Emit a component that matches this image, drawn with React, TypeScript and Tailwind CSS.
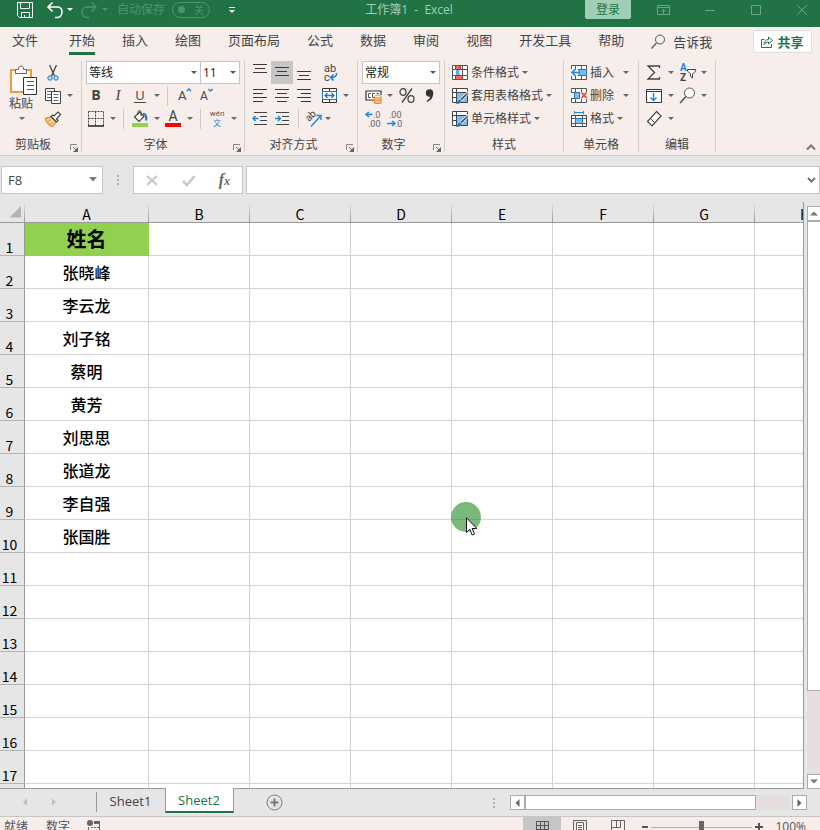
import React, { useState } from "react";

const columns = ["A", "B", "C", "D", "E", "F", "G", "H"];
const names = ["姓名", "张晓峰", "李云龙", "刘子铭", "蔡明", "黄芳", "刘思思", "张道龙", "李自强", "张国胜"];
const rowCount = 18;

const ribbonTabs = ["文件", "开始", "插入", "绘图", "页面布局", "公式", "数据", "审阅", "视图", "开发工具", "帮助"];

type SvgProps = { w?: number; h?: number; className?: string; children: React.ReactNode };

const Svg = ({ w = 16, h = 16, className = "", children }: SvgProps) => (
  <svg
    width={w}
    height={h}
    viewBox={`0 0 ${w} ${h}`}
    fill="none"
    className={`shrink-0 overflow-visible font-[Roboto,sans-serif] ${className}`}
    aria-hidden="true"
  >
    {children}
  </svg>
);

const Caret = ({ className = "text-[#666]" }: { className?: string }) => (
  <Svg w={11} h={11} className={className}>
    <path d="M3 4h6L6 7z" fill="currentColor" />
  </Svg>
);

const Divider = () => (
  <span className="flex h-5 w-[11px] shrink-0 justify-center">
    <span className="h-full w-px bg-[#d0cbc9]" />
  </span>
);

type ToolProps = { label: string; active?: boolean; className?: string; children: React.ReactNode };

const Tool = ({ label, active, className = "w-[22px]", children }: ToolProps) => (
  <button
    aria-label={label}
    className={`flex h-[23px] shrink-0 items-center justify-center ${className} ${active ? "bg-[#c8c6c4]" : ""}`}
  >
    {children}
  </button>
);

const Row = ({ className = "pl-1", children }: { className?: string; children: React.ReactNode }) => (
  <div className={`flex h-[23px] items-center ${className}`}>{children}</div>
);

const Launcher = () => (
  <button aria-label="对话框启动器" className="mr-[3px] ml-1 self-end">
    <Svg w={8} h={8}>
      <path d="M.5 6V.5H7" stroke="#8a8886" />
      <path d="M3 3l3.5 3.5" stroke="#666" />
      <path d="M8 3v5H3z" fill="#666" />
    </Svg>
  </button>
);

type GroupProps = { title: string; width: string; launcher?: boolean; children: React.ReactNode };

const Group = ({ title, width, launcher, children }: GroupProps) => (
  <section aria-label={title} className={`flex shrink-0 flex-col border-r border-[#d2cecb] ${width}`}>
    {children}
    <div className="mt-auto flex h-[15px] items-center">
      <span className="flex-1 text-center leading-[15px]">{title}</span>
      {launcher && <Launcher />}
    </div>
  </section>
);

type PickerProps = { label: string; width: string; options: string[] };

const Picker = ({ label, width, options }: PickerProps) => (
  <div className={`relative h-[23px] shrink-0 ${width}`}>
    <select
      aria-label={label}
      className="h-full w-full appearance-none border border-[#c6c6c6] bg-white pl-[2px] text-xs text-[#222]"
    >
      {options.map((option) => (
        <option key={option}>{option}</option>
      ))}
    </select>
    <Caret className="pointer-events-none absolute top-[6px] right-[2px] text-[#555]" />
  </div>
);

/* horizontal strokes used by the alignment buttons */
const Lines = ({ rows }: { rows: number[][] }) => (
  <Svg w={16} h={23}>
    {rows.map(([x1, x2, y]) => (
      <path key={y} d={`M${x1} ${y}.5H${x2}`} stroke="#3b3a39" />
    ))}
  </Svg>
);

const TableGrid = () => (
  <>
    <path d="M.5.5h15v14H.5z" fill="#fff" />
    <path d="M.5.5h15v14H.5zM.5 4.5h15M.5 10.5h15M4.5.5v14M10.5.5v14" stroke="#555" />
  </>
);

const TableBrush = () => (
  <Svg>
    <path d="M.5.5h15v14H.5z" fill="#fff" />
    <path d="M5 5h10v9H5z" fill="#7fbaf0" />
    <path d="M.5.5h15v14H.5zM.5 4.5h15M.5 9.5H5M4.5.5v14" stroke="#444" />
    <path d="M16 3.5L7.5 11l2 2L16.5 6z" fill="#555" stroke="#fff" />
    <path d="M3.5 15.8c2-.3 2-3.8 4-4 1.800 0 2.400 1.800 1.200 3-1.200 1-3.200 1.300-5.200 1z" fill="#1e77c8" />
  </Svg>
);

const TitleBar = () => (
  <header className="flex h-[27px] shrink-0 items-center bg-[#217346] pb-2 pl-[17px] text-xs text-[#4f9470]">
    <button aria-label="保存" className="text-white">
      <Svg w={16} h={17}>
        <path d="M.5 1.5h15v15H2.5l-2-2zM3.5 1.5v6h9v-6M4.5 16.5v-5h8v5M7.500 14v2" stroke="currentColor" />
      </Svg>
    </button>
    <button aria-label="撤消" className="ml-[14px] flex items-center text-white">
      <Svg w={16} h={17}>
        <path d="M5.500 1.500L1 6l4.500 4.500M1 6h9c3 0 5 2 5 5s-2 5.500-5 5.500H8" stroke="currentColor" strokeWidth="1.600" />
      </Svg>
      <Caret className="ml-px text-white" />
    </button>
    <button aria-label="恢复" className="ml-[6px] flex items-center">
      <Svg w={16} h={17}>
        <path d="M10.500 1.500L15 6l-4.500 4.500M15 6H6c-3 0-5 2-5 5s2 5.500 5 5.500h2" stroke="currentColor" strokeWidth="1.300" />
      </Svg>
      <Caret className="ml-[2px] text-[#4f9470]" />
    </button>
    <span className="ml-[7px] whitespace-nowrap leading-4">自动保存</span>
    <button
      aria-label="自动保存"
      className="ml-[7px] flex h-4 w-[38px] items-center justify-between rounded-full border border-[#4f9470] px-[5px]"
    >
      <span className="h-[7px] w-[7px] rounded-full bg-[#4f9470]" />
      <span className="text-[10px] leading-3">关</span>
    </button>
    <button aria-label="自定义快速访问工具栏" className="ml-[16px] text-white">
      <Svg w={11} h={11}>
        <path d="M3 3.5h6" stroke="currentColor" />
        <path d="M3 6h6L6 9z" fill="currentColor" />
      </Svg>
    </button>
    <h1 className="flex-1 whitespace-pre pr-1 text-center leading-4 text-[#a3cfb5]">工作簿1{"  -  "}Excel</h1>
    <button className="h-[19px] w-[46px] shrink-0 rounded-b-[2px] bg-[#a0cfb6] text-[#217346] leading-4">登录</button>
    <div className="ml-[25px] flex shrink-0 gap-[30px] pr-[10px] text-[#6aa586]">
      <button aria-label="功能区显示选项">
        <Svg>
          <path d="M1.5 3.5h12v9h-12zM1.5 5.5h12M7.5 12V7.5M5.5 9.500l2-2 2 2" stroke="currentColor" />
        </Svg>
      </button>
      <button aria-label="最小化">
        <Svg>
          <path d="M3 8.5h10" stroke="currentColor" />
        </Svg>
      </button>
      <button aria-label="最大化">
        <Svg>
          <path d="M3.5 3.5h9v9h-9z" stroke="currentColor" />
        </Svg>
      </button>
      <button aria-label="关闭">
        <Svg>
          <path d="M3 3l10 10M13 3L3 13" stroke="currentColor" />
        </Svg>
      </button>
    </div>
  </header>
);

const RibbonTabs = () => {
  const [current, setCurrent] = useState("开始");

  return (
    <nav className="flex h-[29px] shrink-0 items-center gap-[27px] pl-3 text-[13px] text-[#444]">
      {ribbonTabs.map((tab) => (
        <button
          key={tab}
          onClick={() => setCurrent(tab)}
          className={`h-[27px] shrink-0 border-b-[3px] leading-6 first:mr-1 ${
            current === tab ? "border-[#217346]" : "border-transparent"
          }`}
        >
          {tab}
        </button>
      ))}
      <button className="flex shrink-0 items-center gap-2 leading-5">
        <Svg w={14} h={15}>
          <circle cx="9" cy="5.5" r="4.5" stroke="#555" />
          <path d="M5.500 9L.5 14.500" stroke="#555" strokeWidth="1.200" />
        </Svg>
        告诉我
      </button>
      <button className="mr-2 ml-auto flex h-[23px] w-[59px] shrink-0 items-center justify-center gap-1 rounded-[2px] border border-[#e1dfdd] bg-white font-bold leading-5 text-[#217346]">
        <Svg w={12} h={13}>
          <path d="M3.500 4.500h-3v8h10V9" stroke="currentColor" />
          <path d="M3 9.500c0-3 2-5 4.500-5V2l4 3.500-4 3.500V7C6 7 4 8 3 9.500z" stroke="currentColor" />
        </Svg>
        共享
      </button>
    </nav>
  );
};

const ClipboardGroup = () => (
  <Group title="剪贴板" width="w-[82px]" launcher>
    <div className="flex">
      <button className="flex w-[42px] flex-col items-center pt-1 leading-[15px]">
        <Svg w={28} h={30} className="ml-[4px]">
          <path d="M2 5h20v22H2z" fill="#fdf9f7" stroke="#f09a3e" strokeWidth="2" />
          <path d="M6.500 8.500v-4h3C9.500 2 10.500 1 12 1s2.500 1 2.500 3.500h3v4z" fill="#fff" stroke="#666" />
          <path d="M14.500 12.500h13v17h-13z" fill="#fff" stroke="#333" />
          <path d="M18 16.500h7M18 20.500h7M18 24.500h7" stroke="#555" />
        </Svg>
        <span className="mt-px">粘贴</span>
        <Caret className="mt-[2px] text-[#666]" />
      </button>
      <div>
        <Row className="">
          <Tool label="剪切">
            <Svg>
              <path d="M4.500 0l5 11M11.500 0l-5 11" stroke="#444" strokeWidth="1.300" />
              <circle cx="5" cy="13" r="2.200" fill="#bfe0f7" stroke="#1e77c8" />
              <circle cx="11" cy="13" r="2.200" fill="#bfe0f7" stroke="#1e77c8" />
            </Svg>
          </Tool>
        </Row>
        <Row className="">
          <Tool label="复制">
            <Svg>
              <path d="M.5.5h9v12h-9z" fill="#fff" stroke="#444" />
              <path d="M2 3.500h5M2 6.500h4M2 9.500h4" stroke="#666" />
              <path d="M6.500 3.500h9v12h-9z" fill="#fff" stroke="#444" />
              <path d="M8.500 6.500h5M8.500 9.500h5M8.500 12.500h5" stroke="#666" />
            </Svg>
          </Tool>
          <Caret />
        </Row>
        <Row className="">
          <Tool label="格式刷">
            <Svg>
              <path d="M.5 7.500L6 6l5 5-3.500 4.500C5 14.500 1.500 11.500.5 7.500z" fill="#fbd3a2" stroke="#ea8b2c" strokeWidth="1.300" />
              <path d="M3 10.500l3-2M5.500 13l2.500-2" stroke="#ea8b2c" />
              <path d="M6 5.500l5.500 5.500L13 9.500 11.500 8 15.500 3.500 13 1 9 5 7.500 4z" fill="#fff" stroke="#444" strokeWidth="1.200" />
            </Svg>
          </Tool>
        </Row>
      </div>
    </div>
  </Group>
);

const FontGroup = () => (
  <Group title="字体" width="w-[163px]" launcher>
    <Row>
      <Picker label="字体" width="w-[115px]" options={["等线", "宋体", "黑体"]} />
      <Picker label="字号" width="-ml-px w-[40px]" options={["11", "12", "14"]} />
    </Row>
    <Row className="pl-[3px]">
      <Tool label="加粗">
        <span className="text-[14px] font-bold">B</span>
      </Tool>
      <Tool label="倾斜">
        <span className="font-['Liberation_Serif',serif] text-[15px] italic">I</span>
      </Tool>
      <Tool label="下划线">
        <span className="border-b border-[#444] px-px text-[13px] leading-[14px]">U</span>
      </Tool>
      <Caret />
      <Divider />
      <Tool label="增大字号">
        <Svg w={16} h={17}>
          <text x="2" y="13" fontSize="13" fill="#444">A</text>
          <path d="M11 4l2-2 2 2" stroke="#1e88d8" strokeWidth="1.500" />
        </Svg>
      </Tool>
      <Tool label="减小字号">
        <Svg w={16} h={17}>
          <text x="2" y="13" fontSize="12" fill="#444">A</text>
          <path d="M10.500 2l2 2 2-2" stroke="#1e88d8" strokeWidth="1.500" />
        </Svg>
      </Tool>
    </Row>
    <Row className="pl-[3px]">
      <Tool label="边框">
        <Svg>
          <path d="M.5.5h15M.5.5v14M15.5.5v14M7.500.5v14M.5 7.500h15" stroke="#444" strokeDasharray="2 1" />
          <path d="M0 15h16" stroke="#222" strokeWidth="1.500" />
        </Svg>
      </Tool>
      <Caret />
      <Divider />
      <Tool label="填充颜色">
        <Svg w={16} h={17}>
          <path d="M7.500 2l4.500 4.500-5 5L2.500 7z" fill="#fff" stroke="#444" strokeWidth="1.200" />
          <path d="M9 6V2c0-2-3-2-3 0v3" stroke="#444" />
          <path d="M11 4c2.500-.5 4 2 3 6.500" stroke="#1e77c8" strokeWidth="2" />
          <path d="M0 13h16v4H0z" fill="#92d050" />
        </Svg>
      </Tool>
      <Caret />
      <Tool label="字体颜色">
        <Svg w={16} h={17}>
          <text x="8" y="11" fontSize="14" textAnchor="middle" fill="#444">A</text>
          <path d="M0 13h16v4H0z" fill="#f00" />
        </Svg>
      </Tool>
      <Caret />
      <Divider />
      <Tool label="显示或隐藏拼音字段">
        <Svg w={16} h={18}>
          <text x="8" y="6" fontSize="8" textAnchor="middle" fill="#555">wén</text>
          <text x="8" y="16" fontSize="8" textAnchor="middle" fill="#1e88d8" className="font-['Noto_Sans_CJK_SC']">文</text>
        </Svg>
      </Tool>
      <Caret />
    </Row>
  </Group>
);

const AlignGroup = () => (
  <Group title="对齐方式" width="w-[113px]" launcher>
    <Row>
      <Tool label="顶端对齐">
        <Lines rows={[[1, 15, 3], [3, 13, 7], [1, 15, 11]]} />
      </Tool>
      <Tool label="垂直居中" active>
        <Lines rows={[[1, 15, 6], [3, 13, 10], [1, 15, 14]]} />
      </Tool>
      <Tool label="底端对齐">
        <Lines rows={[[1, 15, 10], [3, 13, 14], [1, 15, 18]]} />
      </Tool>
      <Tool label="自动换行" className="ml-1 w-[22px]">
        <Svg w={16} h={18}>
          <text x="2" y="8" fontSize="11" fill="#444">ab</text>
          <text x="2" y="17" fontSize="11" fill="#444">c</text>
          <path d="M14.500 9c.5 3-1.500 4.500-6 4.500M11.500 10.500l-3 3 3 3" stroke="#1e88d8" strokeWidth="1.700" />
        </Svg>
      </Tool>
    </Row>
    <Row>
      <Tool label="左对齐">
        <Lines rows={[[1, 15, 5], [1, 11, 9], [1, 15, 13], [1, 11, 17]]} />
      </Tool>
      <Tool label="居中">
        <Lines rows={[[1, 15, 5], [3, 13, 9], [1, 15, 13], [3, 13, 17]]} />
      </Tool>
      <Tool label="右对齐">
        <Lines rows={[[1, 15, 5], [5, 15, 9], [1, 15, 13], [5, 15, 17]]} />
      </Tool>
      <Tool label="合并后居中" className="ml-[3px] w-[22px]">
        <Svg w={15} h={15}>
          <path d="M.5.5h14v14H.5z" fill="#fff" stroke="#333" />
          <path d="M7.500.5v14" stroke="#333" />
          <path d="M.5 3.500h14v8H.5z" fill="#fff" stroke="#1e77c8" />
          <path d="M3 7.500h9M5.500 5L3 7.500 5.500 10M9.500 5L12 7.500 9.500 10" stroke="#1e77c8" strokeWidth="1.300" />
        </Svg>
      </Tool>
      <Caret />
    </Row>
    <Row>
      <Tool label="减少缩进量">
        <Svg>
          <path d="M2 1.500h13M8 5.500h7M8 9.500h7M2 13.500h13" stroke="#444" />
          <path d="M6.500 7.500H1M3.500 5L1 7.500 3.500 10" stroke="#1e88d8" strokeWidth="1.400" />
        </Svg>
      </Tool>
      <Tool label="增加缩进量">
        <Svg>
          <path d="M2 1.500h13M8 5.500h7M8 9.500h7M2 13.500h13" stroke="#444" />
          <path d="M1 7.500h5.500M4 5l2.500 2.500L4 10" stroke="#1e88d8" strokeWidth="1.400" />
        </Svg>
      </Tool>
      <Divider />
      <Tool label="方向" className="w-[18px]">
        <Svg w={17} h={17}>
          <text fontSize="10" fill="#444" transform="translate(4 12) rotate(-45)">ab</text>
          <path d="M6 16.500L15.500 6M11.500 5.500h4.500V10" stroke="#1e88d8" strokeWidth="1.400" />
        </Svg>
      </Tool>
      <Caret />
    </Row>
  </Group>
);

const NumberGroup = () => (
  <Group title="数字" width="w-[87px]" launcher>
    <Row>
      <Picker label="数字格式" width="w-[78px]" options={["常规", "数值", "货币"]} />
    </Row>
    <Row>
      <Tool label="会计数字格式">
        <Svg w={17} h={16}>
          <path d="M9 12H1V3h15v4" fill="#fff" stroke="#333" strokeWidth="1.200" />
          <path d="M6 5.500H3.500v4H6M10 5.500H7.500v4H9M14 5.500h-2.500" stroke="#555" />
          <path d="M9.500 8.500v6c0 1.200 6.500 1.200 6.500 0v-6" fill="#f9c48d" stroke="#ea8b2c" strokeWidth="1.200" />
          <ellipse cx="12.700" cy="8.500" rx="3.200" ry="1.400" fill="#fff" stroke="#ea8b2c" />
          <path d="M9.500 11.500c0 1.200 6.500 1.200 6.500 0" stroke="#ea8b2c" />
        </Svg>
      </Tool>
      <Caret />
      <Tool label="百分比样式" className="w-[23px]">
        <Svg w={16} h={15}>
          <ellipse cx="4" cy="4" rx="3" ry="3.300" stroke="#444" strokeWidth="1.300" />
          <ellipse cx="12" cy="11" rx="3" ry="3.300" stroke="#444" strokeWidth="1.300" />
          <path d="M13 .5L3 14.500" stroke="#444" strokeWidth="1.300" />
        </Svg>
      </Tool>
      <Tool label="千位分隔样式">
        <Svg w={9} h={13}>
          <circle cx="4.500" cy="4" r="3.700" fill="#333" />
          <path d="M8.200 4c0 4.500-2.200 7.500-6.200 9l-.5-1c2.500-1.500 3.800-3 4-6z" fill="#333" />
        </Svg>
      </Tool>
    </Row>
    <Row>
      <Tool label="增加小数位数">
        <Svg w={16} h={17}>
          <text x="8" y="8" fontSize="9" fill="#666">.0</text>
          <text x="3" y="17" fontSize="9" fill="#666">.00</text>
          <path d="M7.500 4.500H1M4 2L1 4.500 4 7" stroke="#1e88d8" strokeWidth="1.500" />
        </Svg>
      </Tool>
      <Tool label="减少小数位数">
        <Svg w={16} h={17}>
          <text x="2" y="8" fontSize="9" fill="#666">.00</text>
          <text x="8" y="17" fontSize="9" fill="#666">.0</text>
          <path d="M0 13.500h7.500M5 11l3 2.500L5 16" stroke="#1e88d8" strokeWidth="1.500" />
        </Svg>
      </Tool>
    </Row>
  </Group>
);

const StylesGroup = () => (
  <Group title="样式" width="w-[119px]">
    {[
      {
        label: "条件格式",
        icon: (
          <Svg>
            <TableGrid />
            <path d="M3.500.5h5v4h-5zM3.500 10.500h7v4h-7z" fill="#f0686a" stroke="#c8262a" />
            <path d="M4 5h3.500v5H4z" fill="#5aa9ea" />
          </Svg>
        ),
      },
      { label: "套用表格格式", icon: <TableBrush /> },
      { label: "单元格样式", icon: <TableBrush /> },
    ].map(({ label, icon }) => (
      <Row key={label} className="pl-[7px]">
        <button className="flex items-center whitespace-nowrap leading-5">
          {icon}
          <span className="ml-[3px]">{label}</span>
          <Caret />
        </button>
      </Row>
    ))}
  </Group>
);

const CellsGroup = () => (
  <Group title="单元格" width="w-[75px]">
    <Row className="pl-[7px]">
      <button className="flex items-center leading-5">
        <Svg>
          <TableGrid />
          <path d="M8 4.500h7.500v6H8z" fill="#7fbaf0" stroke="#1e77c8" />
          <path d="M0 4h7v7H0z" fill="#f7edeb" />
          <path d="M9 7.500H1M4.500 4L1 7.500 4.500 11" stroke="#1e88d8" strokeWidth="1.500" />
        </Svg>
        <span className="mr-[6px] ml-[3px]">插入</span>
        <Caret />
      </button>
    </Row>
    <Row className="pl-[7px]">
      <button className="flex items-center leading-5">
        <Svg>
          <TableGrid />
          <path d="M3.500 4.500h5v6h-5z" fill="#7fbaf0" stroke="#1e77c8" />
          <path d="M0 5h3v5H0zM9 4h8v7H9z" fill="#f7edeb" />
          <path d="M10.500 4.500l5 5.500M15.500 4.500l-5 5.500" stroke="#e8484a" strokeWidth="1.800" />
        </Svg>
        <span className="mr-[6px] ml-[3px]">删除</span>
        <Caret />
      </button>
    </Row>
    <Row className="pl-[7px]">
      <button className="flex items-center leading-5">
        <Svg>
          <path d="M.5 4.500h15v11H.5z" fill="#fff" stroke="#444" />
          <path d="M4.500 4.500v11M11.500 4.500v11M.5 7.500h15M.5 12.500h15" stroke="#555" />
          <path d="M4.500 7.500h7v5h-7z" fill="#7fbaf0" stroke="#1e77c8" />
          <path d="M3.500 0v3M12.500 0v3M3.500 1.500h9" stroke="#1e88d8" />
        </Svg>
        <span className="ml-[3px]">格式</span>
        <Caret />
      </button>
    </Row>
  </Group>
);

const EditGroup = () => (
  <Group title="编辑" width="w-[77px]">
    <Row>
      <Tool label="自动求和">
        <Svg>
          <path d="M13.500 3V1H2l6.500 6.500L2 14h11.500v-2" stroke="#444" strokeWidth="1.300" />
        </Svg>
      </Tool>
      <Caret />
      <Tool label="排序和筛选">
        <Svg w={17} h={17}>
          <text x="1" y="7" fontSize="10" fontWeight="bold" fill="#1e88d8">A</text>
          <text x="1" y="17" fontSize="10" fontWeight="bold" fill="#444">Z</text>
          <path d="M8.500 5.500h8V7l-3 3v4l-2-1.500V10l-3-3z" fill="#fff" stroke="#444" />
        </Svg>
      </Tool>
      <Caret />
    </Row>
    <Row>
      <Tool label="填充">
        <Svg>
          <path d="M.5 1.500h15v13H.5z" fill="#fff" stroke="#333" />
          <path d="M.5 3.500h15" stroke="#333" />
          <path d="M7.500 5v7M4.500 9.500l3 3 3-3" stroke="#1e88d8" strokeWidth="1.400" />
        </Svg>
      </Tool>
      <Caret />
      <Tool label="查找和选择">
        <Svg>
          <circle cx="10.500" cy="5" r="5" fill="#fff" stroke="#555" />
          <path d="M7 8.500L1 15" stroke="#555" strokeWidth="1.600" />
        </Svg>
      </Tool>
      <Caret />
    </Row>
    <Row>
      <Tool label="清除">
        <Svg>
          <path d="M10.500.5L15 5l-9 10-4.500-4.500z" fill="#fff" stroke="#444" strokeWidth="1.200" />
          <path d="M4.500 7.500L9 12" stroke="#444" />
        </Svg>
      </Tool>
      <Caret />
    </Row>
  </Group>
);

const Ribbon = () => (
  <div className="flex h-[100px] shrink-0 border-b border-[#d2cecb] pt-[5px] pb-[3px] text-xs text-[#444]">
    <ClipboardGroup />
    <FontGroup />
    <AlignGroup />
    <NumberGroup />
    <StylesGroup />
    <CellsGroup />
    <EditGroup />
    <button aria-label="折叠功能区" className="mr-1 ml-auto self-end">
      <Svg w={10} h={8}>
        <path d="M1 5.500l4-4 4 4" stroke="#777" strokeWidth="2" />
      </Svg>
    </button>
  </div>
);

const Dots = () => (
  <Svg w={3} h={12}>
    <path d="M0 1h2v2H0zM0 5h2v2H0zM0 9h2v2H0z" fill="#b0b0b0" />
  </Svg>
);

const FormulaBar = () => (
  <div className="flex shrink-0 items-center pt-[10px] pb-2 pl-px">
    <div className="relative h-7 w-[102px] shrink-0">
      <input
        aria-label="名称框"
        defaultValue="F8"
        className="h-full w-full border border-[#c6c6c6] bg-white pl-[6px] text-[13px] text-[#444]"
      />
      <Svg w={8} h={5} className="absolute top-[11px] right-[6px]">
        <path d="M0 0h8L4 4.500z" fill="#777" />
      </Svg>
    </div>
    <span className="mr-[13px] ml-[14px]">
      <Dots />
    </span>
    <div className="flex h-7 w-[110px] shrink-0 items-center justify-around border border-[#c6c6c6] bg-white">
      <button aria-label="取消">
        <Svg w={12} h={12}>
          <path d="M1 2l10 9M11 2L1 11" stroke="#c4c4c4" strokeWidth="1.800" />
        </Svg>
      </button>
      <button aria-label="输入">
        <Svg w={13} h={12}>
          <path d="M1 7l4 4 7.500-9" stroke="#c9c9c9" strokeWidth="2.600" />
        </Svg>
      </button>
      <button
        aria-label="插入函数"
        className="font-['Liberation_Serif',serif] text-[16px] font-bold italic leading-5 text-[#666]"
      >
        f<span className="text-[12px]">x</span>
      </button>
    </div>
    <div className="relative ml-[3px] h-7 flex-1">
      <input aria-label="编辑栏" className="h-full w-full border border-[#c6c6c6] bg-white px-2 text-xs" />
      <Svg w={9} h={7} className="absolute top-[11px] right-[4px]">
        <path d="M1 1l3.500 3.500L8 1" stroke="#777" strokeWidth="2" />
      </Svg>
    </div>
  </div>
);

const Grid = () => (
  <div className="relative min-w-0 flex-1 overflow-hidden border-r border-b border-[#999]">
    <table className="w-[856px] table-fixed border-separate border-spacing-0 font-['Noto_Sans_CJK_SC',sans-serif] text-black">
      <colgroup>
        <col className="w-[25px]" />
        {columns.map((column) => (
          <col key={column} className={column === "A" ? "w-[124px]" : "w-[101px]"} />
        ))}
      </colgroup>
      <thead>
        <tr className="h-[21px] bg-[#e6e6e6] text-sm">
          <th
            aria-label="全选"
            className="border-b border-[#999] bg-[linear-gradient(#e6e6e6,#999)] bg-[length:1px_100%] bg-right bg-no-repeat p-0"
          >
            <Svg w={12} h={12} className="ml-[9px]">
              <path d="M12 0v11.500H.5z" fill="#b4b4b4" />
            </Svg>
          </th>
          {columns.map((column) => (
            <th
              key={column}
              scope="col"
              className="border-b border-[#999] bg-[linear-gradient(#e6e6e6,#999)] bg-[length:1px_100%] bg-right bg-no-repeat p-0 pr-px align-bottom font-normal leading-4"
            >
              {column}
            </th>
          ))}
        </tr>
      </thead>
      <tbody>
        {Array.from({ length: rowCount }, (_, row) => (
          <tr key={row} className="h-[33px]">
            <th
              scope="row"
              className="border-r border-b border-r-[#999] border-b-[#b4b4b4] bg-[#e6e6e6] p-0 pr-[5px] align-bottom text-sm font-normal leading-4"
            >
              {row + 1}
            </th>
            {columns.map((column) => {
              const value = column === "A" ? names[row] : undefined;
              const heading = column === "A" && row === 0;
              return (
                <td
                  key={column}
                  className={`border-r border-b p-0 text-center ${
                    heading
                      ? "border-[#92d050] bg-[#92d050] text-xl leading-6 font-bold"
                      : "border-[#d4d4d4] bg-white text-base leading-6 font-medium"
                  }`}
                >
                  {value}
                </td>
              );
            })}
          </tr>
        ))}
      </tbody>
    </table>

    {/* mouse pointer with its highlight */}
    <div className="pointer-events-none absolute top-[300px] left-[451px] h-[30px] w-[30px] rounded-full bg-[#228b22]/60">
      <Svg w={13} h={20} className="absolute top-[15px] left-[15px]">
        <path d="M.5.8v14.700l3.300-3.200 2.400 5.700 2.300-1-2.400-5.500h4.700z" fill="#fff" stroke="#111" />
      </Svg>
    </div>
  </div>
);

const VerticalScroll = () => (
  <div className="flex w-4 shrink-0 flex-col pt-1 pl-[3px]">
    <button
      aria-label="向上滚动"
      className="flex h-[15px] items-center justify-center border border-r-0 border-[#ababab] bg-white"
    >
      <Svg w={8} h={5}>
        <path d="M0 4.500h8L4 .5z" fill="#777" />
      </Svg>
    </button>
    <div className="flex-1 bg-[#e6dedd]">
      <div className="h-[85%] border border-r-0 border-[#ababab] bg-white" />
    </div>
    <button
      aria-label="向下滚动"
      className="flex h-[15px] items-center justify-center border border-r-0 border-[#ababab] bg-white"
    >
      <Svg w={8} h={5}>
        <path d="M0 .5h8L4 4.500z" fill="#777" />
      </Svg>
    </button>
  </div>
);

const SheetTabs = () => (
  <div className="flex h-7 shrink-0 items-start border-b border-[#c6c6c6] text-[13px]">
    <div className="flex h-[25px] w-24 shrink-0 items-center gap-[23px] pl-[22px]">
      <button aria-label="上一个工作表">
        <Svg w={6} h={8}>
          <path d="M5 .5v7L1 4z" fill="#bdbdbd" />
        </Svg>
      </button>
      <button aria-label="下一个工作表">
        <Svg w={6} h={8}>
          <path d="M1 .5v7L5 4z" fill="#bdbdbd" />
        </Svg>
      </button>
    </div>
    <span className="mt-[3px] h-5 w-px bg-[#999]" />
    <button className="h-6 w-[68px] shrink-0 pr-px leading-6 text-[#444]">Sheet1</button>
    <button className="relative z-10 -mt-px h-[25px] w-[69px] shrink-0 border-x border-b-2 border-x-[#999] border-b-[#217346] bg-white pr-px leading-6 text-[#217346]">
      Sheet2
    </button>
    <button aria-label="新工作表" className="mt-[5px] ml-8">
      <Svg w={17} h={17}>
        <circle cx="8.500" cy="8.500" r="7.500" stroke="#777" />
        <path d="M4.500 8.500h8M8.500 4.500v8" stroke="#777" strokeWidth="2" />
      </Svg>
    </button>
    <div className="mt-[6px] mr-[13px] ml-auto flex shrink-0 items-center">
      <Dots />
      <button
        aria-label="向左滚动"
        className="ml-[14px] flex h-[15px] w-[15px] items-center justify-center border border-[#ababab] bg-white"
      >
        <Svg w={5} h={8}>
          <path d="M4.500 0v8l-4-4z" fill="#666" />
        </Svg>
      </button>
      <div className="flex h-[15px] w-[265px] bg-[#e6dedd]">
        <div className="w-[231px] border border-[#ababab] bg-white" />
      </div>
      <button
        aria-label="向右滚动"
        className="ml-[2px] flex h-[15px] w-[15px] items-center justify-center border border-[#ababab] bg-white"
      >
        <Svg w={5} h={8}>
          <path d="M.5 0v8l4-4z" fill="#666" />
        </Svg>
      </button>
    </div>
  </div>
);

const StatusBar = () => (
  <footer className="h-[13px] shrink-0 overflow-hidden bg-[#f7edeb] text-xs text-[#555]">
    <div className="flex h-5 items-center pr-[14px] pl-1 leading-4">
      <span>就绪</span>
      <span className="ml-[18px]">数字</span>
      <Svg w={14} h={14} className="ml-[17px]">
        <circle cx="3" cy="3" r="3" fill="#666" />
        <path d="M7 1h6v3H7z" fill="#666" />
        <path d="M1.500 7v6.500h11V4M4 7.500h2M7 7.500h2M10 7.500h2M4 10.500h2M7 10.500h2M10 10.500h2" stroke="#666" />
      </Svg>
      <div className="ml-auto flex items-center">
        <button aria-label="普通" className="flex h-5 w-[38px] items-center justify-center bg-[#c8c6c4]">
          <Svg w={13} h={13}>
            <path d="M.5.5h12v12H.5zM.5 4.500h12M.5 8.500h12M4.500.5v12M8.500.5v12" stroke="#555" />
          </Svg>
        </button>
        <button aria-label="页面布局" className="flex w-[38px] justify-center">
          <Svg w={14} h={14}>
            <path d="M.5.5h13v13H.5zM3.500 2.500h7v11h-7zM5 5.500h4M5 7.500h4M5 9.500h4" stroke="#666" />
          </Svg>
        </button>
        <button aria-label="分页预览" className="flex w-[38px] justify-center">
          <Svg w={14} h={14}>
            <path d="M.5.5h13v13H.5zM.5 7.500h9M5.500.5v7M9.500.5v7" stroke="#666" />
          </Svg>
        </button>
        <button aria-label="缩小" className="ml-[5px]">
          <Svg w={6} h={8}>
            <path d="M0 4h6" stroke="#555" strokeWidth="2" />
          </Svg>
        </button>
        <input
          type="range"
          aria-label="显示比例"
          defaultValue={50}
          className="mx-[3px] h-3 w-[101px] appearance-none bg-[linear-gradient(#b0aaa8,#b0aaa8)] bg-[length:100%_1px] bg-center bg-no-repeat [&::-webkit-slider-thumb]:h-3 [&::-webkit-slider-thumb]:w-[5px] [&::-webkit-slider-thumb]:appearance-none [&::-webkit-slider-thumb]:bg-[#666]"
        />
        <button aria-label="放大">
          <Svg w={8} h={8}>
            <path d="M0 4h8M4 0v8" stroke="#555" strokeWidth="2" />
          </Svg>
        </button>
        <span className="ml-3">100%</span>
      </div>
    </div>
  </footer>
);

const App: React.FC = () => (
  <div className="flex h-screen w-full flex-col overflow-hidden bg-[#e6e6e6] font-['Open_Sans','Noto_Sans_CJK_SC',sans-serif]">
    <TitleBar />
    <div className="shrink-0 bg-[#f7edeb]">
      <RibbonTabs />
      <Ribbon />
    </div>
    <FormulaBar />
    <main className="flex min-h-0 flex-1">
      <Grid />
      <VerticalScroll />
    </main>
    <SheetTabs />
    <StatusBar />
  </div>
);

export default App;
